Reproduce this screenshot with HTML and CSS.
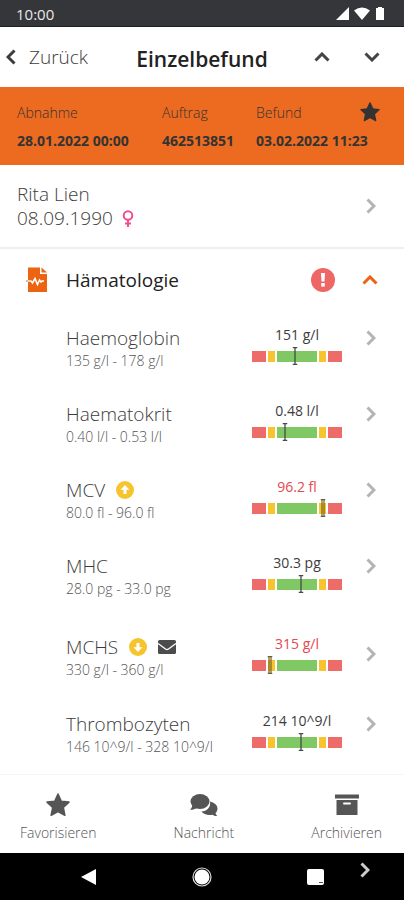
FILE: index.html
```html
<!DOCTYPE html>
<html lang="de">
<head>
<meta charset="utf-8">
<meta name="viewport" content="width=device-width, initial-scale=1">
<title>Einzelbefund</title>
<link rel="stylesheet" href="styles.css">
</head>
<body>
<svg class="defs" aria-hidden="true">
  <symbol id="chevron" viewBox="0 0 10 16"><path d="M1.5 1.5 8 8l-6.500 6.500" fill="none" stroke="currentColor" stroke-width="3"/></symbol>
  <symbol id="up" viewBox="0 0 16 10"><path d="M1.500 8.500 8 2l6.500 6.500" fill="none" stroke="currentColor" stroke-width="3"/></symbol>
  <symbol id="down" viewBox="0 0 16 10"><path d="M1.500 1.500 8 8l6.500-6.500" fill="none" stroke="currentColor" stroke-width="3"/></symbol>
  <symbol id="star" viewBox="0 0 24 24"><path d="M12 1l3.300 7.200 7.700.9-5.700 5.300 1.600 7.900L12 18.500l-6.900 3.800 1.600-7.900L1 9.100l7.700-.9z" fill="currentColor" stroke="currentColor" stroke-width="1.500" stroke-linejoin="round"/></symbol>
  <symbol id="marker" viewBox="0 0 5 18"><path d="M0 .5h5M0 17.500h5M2.500 0v18" fill="none" stroke="#454a45" stroke-width="1.300"/></symbol>
  <symbol id="marker-wide" viewBox="0 0 5 18"><path d="M0 .5h5M0 17.500h5" fill="none" stroke="#555" stroke-width="1.300"/><path d="M2.500 0v18" stroke="#7a6320" stroke-opacity=".6" stroke-width="4"/></symbol>
</svg>

<div class="status">
  <span>10:00</span>
  <svg class="status-icons" viewBox="0 0 52 16" aria-hidden="true">
    <path d="M1 14 14 1v13z" fill="#fff"/>
    <path d="M19 4.500Q27 -1.500 35 4.500L27 14z" fill="#fff"/>
    <path d="M41 2h2V1h4v1h2v12h-8z" fill="#fff"/>
  </svg>
</div>

<header class="topbar">
  <a class="back" href="#"><svg class="back-icon" viewBox="0 0 10 16" aria-hidden="true"><path d="M8.500 1.500 2 8l6.500 6.500" fill="none" stroke="currentColor" stroke-width="3"/></svg>Zurück</a>
  <h1>Einzelbefund</h1>
  <div class="steps">
    <button type="button" aria-label="Vorheriger Befund"><svg class="arrow"><use href="#up"/></svg></button>
    <button type="button" aria-label="Nächster Befund"><svg class="arrow"><use href="#down"/></svg></button>
  </div>
</header>

<main>
  <section class="summary">
    <dl>
      <div><dt>Abnahme</dt><dd>28.01.2022 00:00</dd></div>
      <div><dt>Auftrag</dt><dd>462513851</dd></div>
      <div><dt>Befund</dt><dd>03.02.2022 11:23</dd></div>
    </dl>
    <button class="favorite" type="button" aria-label="Favorit"><svg><use href="#star"/></svg></button>
  </section>

  <a class="patient" href="#">
    <span class="patient-data">
      <span>Rita Lien</span>
      <span class="birth">08.09.1990
        <svg class="female" viewBox="0 0 12 17" aria-hidden="true"><path d="M6 10v7M3 13.500h6" stroke="#ef4f91" stroke-width="2"/><circle cx="6" cy="5.500" r="4.300" fill="none" stroke="#ef4f91" stroke-width="2"/></svg>
      </span>
    </span>
    <svg class="chevron"><use href="#chevron"/></svg>
  </a>

  <section>
    <button class="group" type="button" aria-expanded="true">
      <svg class="report" viewBox="0 0 22 26" aria-hidden="true"><path d="M2 .5h12v6.500h7v18H2z" fill="#ec6312"/><path d="M15.500 .5v5H21z" fill="#ec6312"/><path d="M0 14h5l1.500 2L9 11.500l2.500 6 2-4.500 1.500 2 1-1h2" fill="none" stroke="#fff" stroke-width="1.600"/><path d="M0 14h2" stroke="#ec6312" stroke-width="1.200"/></svg>
      <span class="group-name">Hämatologie</span>
      <svg class="alert" viewBox="0 0 24 24" aria-hidden="true"><circle cx="12" cy="12" r="12" fill="#ee6666"/><path d="M10 5h4l-.5 8.500h-3z" fill="#fff"/><rect x="10.200" y="15" width="3.600" height="3.600" fill="#fff"/></svg>
      <svg class="arrow"><use href="#up"/></svg>
    </button>

    <ul class="results">
      <li><a class="result" href="#">
        <span class="test"><span class="name">Haemoglobin</span><span class="range">135 g/l - 178 g/l</span></span>
        <span class="measure"><span class="value">151 g/l</span><span class="scale"><i></i><i></i><i></i><i></i><i></i><svg class="marker" style="left:48%"><use href="#marker"/></svg></span></span>
        <svg class="chevron"><use href="#chevron"/></svg>
      </a></li>
      <li><a class="result" href="#">
        <span class="test"><span class="name">Haematokrit</span><span class="range">0.40 l/l - 0.53 l/l</span></span>
        <span class="measure"><span class="value">0.48 l/l</span><span class="scale"><i></i><i></i><i></i><i></i><i></i><svg class="marker" style="left:37%"><use href="#marker"/></svg></span></span>
        <svg class="chevron"><use href="#chevron"/></svg>
      </a></li>
      <li><a class="result" href="#">
        <span class="test"><span class="name">MCV
          <svg class="trend" viewBox="0 0 18 18" aria-hidden="true"><circle cx="9" cy="9" r="9" fill="#f6c42c"/><path d="M9 4l4.500 4.700h-3V13h-3V8.700h-3z" fill="#fff"/></svg></span><span class="range">80.0 fl - 96.0 fl</span></span>
        <span class="measure"><span class="value out">96.2 fl</span><span class="scale"><i></i><i></i><i></i><i></i><i></i><svg class="marker" style="left:79%"><use href="#marker-wide"/></svg></span></span>
        <svg class="chevron"><use href="#chevron"/></svg>
      </a></li>
      <li><a class="result" href="#">
        <span class="test"><span class="name">MHC</span><span class="range">28.0 pg - 33.0 pg</span></span>
        <span class="measure"><span class="value">30.3 pg</span><span class="scale"><i></i><i></i><i></i><i></i><i></i><svg class="marker" style="left:54%"><use href="#marker"/></svg></span></span>
        <svg class="chevron"><use href="#chevron"/></svg>
      </a></li>
      <li><a class="result has-message" href="#">
        <span class="test"><span class="name">MCHS
          <svg class="trend" viewBox="0 0 18 18" aria-hidden="true"><circle cx="9" cy="9" r="9" fill="#f6c42c"/><path d="M9 14l4.500-4.700h-3V5h-3v4.300h-3z" fill="#fff"/></svg>
          <svg class="mail" viewBox="0 0 18 14" aria-hidden="true"><rect width="18" height="14" rx="1.500" fill="#4c4c4c"/><path d="M0 3.500 7.500 9q1.500 1 3 0L18 3.500" fill="none" stroke="#fff" stroke-width="1.400"/></svg></span><span class="range">330 g/l - 360 g/l</span></span>
        <span class="measure"><span class="value out">315 g/l</span><span class="scale"><i></i><i></i><i></i><i></i><i></i><svg class="marker" style="left:20%"><use href="#marker-wide"/></svg></span></span>
        <svg class="chevron"><use href="#chevron"/></svg>
      </a></li>
      <li><a class="result" href="#">
        <span class="test"><span class="name">Thrombozyten</span><span class="range">146 10^9/l - 328 10^9/l</span></span>
        <span class="measure"><span class="value">214 10^9/l</span><span class="scale"><i></i><i></i><i></i><i></i><i></i><svg class="marker" style="left:54%"><use href="#marker"/></svg></span></span>
        <svg class="chevron"><use href="#chevron"/></svg>
      </a></li>
    </ul>
  </section>
</main>

<nav class="actions">
  <button type="button"><svg class="action-icon"><use href="#star"/></svg>Favorisieren</button>
  <button type="button"><svg class="action-icon" viewBox="0 0 28 24" aria-hidden="true"><path d="M20 8.500c4 .8 7.500 3.500 7.500 7 0 2-1 3.500-2 4.500.3 1.500 1 2.300 2 3-2 .2-3.800-.5-5-1.300-4.500 1-9-.4-11-3.200C17 18.500 21 14 20 8.500z" fill="#555"/><ellipse cx="10" cy="8.500" rx="9.500" ry="7.500" fill="#555"/><path d="M2 12c.2 2-.5 3.500-2 4.800 2.500.2 5-.5 6.500-1.800z" fill="#555"/></svg>Nachricht</button>
  <button type="button"><svg class="action-icon" viewBox="0 0 24 24" aria-hidden="true"><path d="M0 1.500h24v4H0zM1.500 7h21v15h-21z" fill="#555"/><path d="M9 10.500h6" stroke="#fff" stroke-width="2" stroke-linecap="round"/></svg>Archivieren</button>
</nav>

<div class="system">
  <button type="button" aria-label="Zurück"><svg viewBox="0 0 20 20"><path d="M2 10 17 2v16z" fill="#fff"/></svg></button>
  <button type="button" aria-label="Startbildschirm"><svg viewBox="0 0 20 20"><circle cx="10" cy="10" r="9" fill="none" stroke="#ddd" stroke-width="1.200"/><circle cx="10" cy="10" r="7.500" fill="#fff"/></svg></button>
  <button type="button" aria-label="Übersicht"><svg viewBox="0 0 20 20"><rect x="2" y="2" width="17" height="16" rx="2" fill="#fff"/><path d="M14 15.500h4" stroke="#555"/></svg></button>
  <svg class="chevron overlay"><use href="#chevron"/></svg>
</div>
</body>
</html>
```
FILE: styles.css
```css
* { box-sizing: border-box; }

body {
  margin: 0;
  min-height: 100vh;
  display: flex;
  flex-direction: column;
  background: #fff;
  color: #3c3c3c;
  font-family: "Open Sans", "Noto Sans", sans-serif;
  font-size: 19px;
  line-height: 24px;
}

button {
  padding: 0;
  border: 0;
  background: none;
  color: inherit;
  font: inherit;
  cursor: pointer;
}

a { color: inherit; text-decoration: none; }
svg { display: block; flex: none; }
.defs { position: absolute; width: 0; height: 0; }

.chevron { width: 10px; height: 16px; color: #b4b4b4; }
.arrow { width: 16px; height: 10px; }

.status {
  display: flex;
  align-items: center;
  justify-content: space-between;
  height: 27px;
  padding: 2px 17px 0 16px;
  background: #35363a;
  border-bottom: 1px solid #1d1e26;
  color: #e8e8e8;
  font-size: 15px;
}
.status-icons { width: 52px; height: 16px; }

.topbar {
  display: grid;
  grid-template-columns: 1fr auto 1fr;
  align-items: center;
  height: 60px;
  padding: 0 6px;
}
.back { display: flex; align-items: center; gap: 13px; font-weight: 300; }
.back-icon { width: 10px; height: 16px; }
h1 { margin: 4px 0 0; color: #222; font-size: 21px; font-weight: 600; }
.steps { display: flex; justify-content: flex-end; gap: 34px; padding-right: 18px; color: #444; }
.steps .arrow { margin: 4px 0; }

.summary {
  position: relative;
  padding: 12px 24px 10px 17px;
  background: #ec6b20;
  color: #333;
}
dl { display: grid; grid-template-columns: 145fr 94fr 124fr; margin: 0; white-space: nowrap; }
dt { font-size: 14px; font-weight: 300; line-height: 28px; }
dd { margin: 0; font-size: 14px; font-weight: 700; line-height: 28px; }
.favorite { position: absolute; top: 15px; right: 24px; }
.favorite svg { width: 20px; height: 20px; }

.patient {
  display: flex;
  align-items: center;
  justify-content: space-between;
  padding: 17px 28px 17px 17px;
  border-bottom: 2px solid #eee;
  font-weight: 300;
}
.patient-data { display: grid; }
.birth { display: flex; align-items: center; gap: 9px; }
.female { width: 12px; height: 17px; }

.group {
  display: flex;
  align-items: center;
  width: 100%;
  height: 61px;
  padding: 0 26px;
  color: #ec6312;
  text-align: left;
}
.report { width: 22px; height: 26px; }
.group-name { flex: 1; margin-left: 18px; color: #222; }
.alert { width: 24px; height: 24px; margin-right: 27px; }

.results { margin: 0; padding: 0; list-style: none; }
.result {
  display: grid;
  grid-template-columns: 1fr 90px 10px;
  column-gap: 24px;
  align-items: start;
  height: 76px;
  padding: 16px 28px 0 66px;
}
.has-message { height: 82px; padding-top: 21px; }
.result .chevron { margin-top: 4px; }
.has-message .chevron { margin-top: 11px; }
.test { display: grid; row-gap: 1px; white-space: nowrap; }
.name { display: flex; align-items: center; gap: 11px; font-weight: 300; }
.range { color: #555; font-size: 14px; font-weight: 300; line-height: 20px; }
.trend { width: 18px; height: 18px; }
.mail { width: 18px; height: 14px; }
.measure { display: grid; justify-items: center; }
.value { font-size: 14px; line-height: 18px; white-space: nowrap; }
.out { color: #e5484d; }
.scale {
  position: relative;
  display: grid;
  grid-template-columns: 14px 7px 1fr 7px 14px;
  gap: 2px;
  width: 100%;
  height: 11px;
  margin-top: 7px;
}
.scale i { background: #ed6b69; }
.scale i:nth-child(2), .scale i:nth-child(4) { background: #f6c42c; }
.scale i:nth-child(3) { background: #80c863; }
.marker { position: absolute; top: -4px; width: 5px; height: 18px; transform: translateX(-50%); }

.actions {
  display: flex;
  justify-content: space-between;
  height: 79px;
  margin-top: auto;
  padding: 18px 22px 0 20px;
  border-top: 1px solid #f5f5f5;
  color: #555;
  font-size: 14px;
  font-weight: 300;
  line-height: 20px;
}
.actions button { display: grid; justify-items: center; align-content: start; gap: 6px; }
.action-icon { width: 28px; height: 24px; }

.system {
  position: relative;
  display: flex;
  align-items: center;
  justify-content: space-around;
  height: 47px;
  padding: 0 32px;
  background: #000;
}
.system button svg { width: 20px; height: 20px; }
.overlay { position: absolute; top: 9px; right: 34px; color: #ccc; }
```
